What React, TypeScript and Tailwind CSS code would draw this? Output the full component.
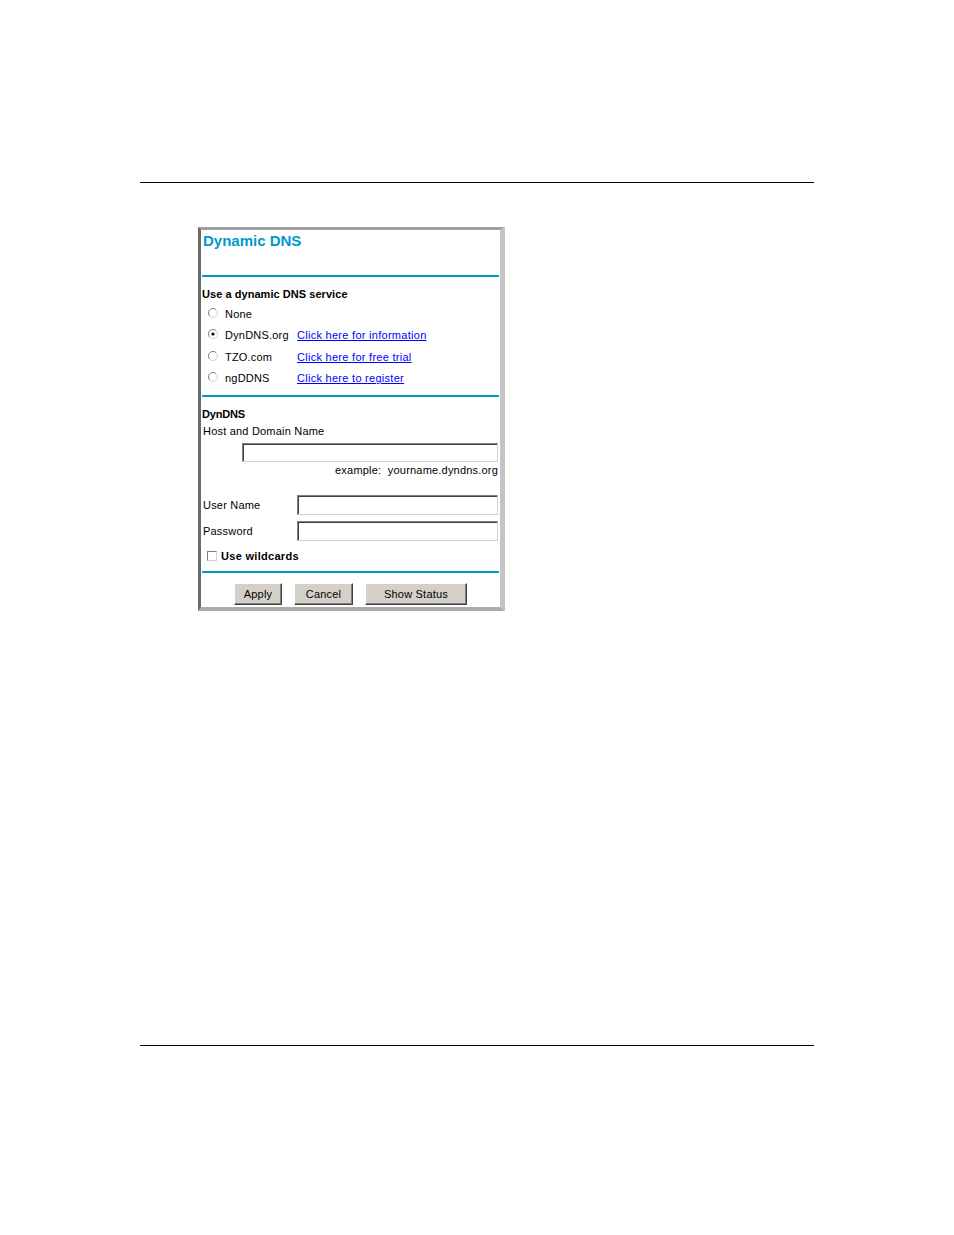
import * as React from 'react';

const FONT = { fontFamily: '"Liberation Sans", Arial, sans-serif' };

const SERVICES = [
  { label: 'None', link: '', checked: false },
  { label: 'DynDNS.org', link: 'Click here for information', checked: true },
  { label: 'TZO.com', link: 'Click here for free trial', checked: false },
  { label: 'ngDDNS', link: 'Click here to register', checked: false },
];

function Radio({ checked }: { checked: boolean }) {
  return (
    <svg width="10" height="10" viewBox="0 0 10 10" className="shrink-0">
      <circle cx="5" cy="5" r="4.5" fill="#fff" />
      <path d="M1.8 8.2 A4.5 4.5 0 0 1 8.2 1.8" fill="none" stroke="#7a7a7a" strokeWidth="1" />
      <path d="M8.2 1.8 A4.5 4.5 0 0 1 1.8 8.2" fill="none" stroke="#d4d0c8" strokeWidth="1" />
      {checked && <circle cx="5" cy="5" r="1.6" fill="#000" />}
    </svg>
  );
}

function Rule() {
  return <div className="ml-[1px] h-[2px] w-[297px] bg-[#0099cc]" />;
}

function TextBox({ className }: { className: string }) {
  return (
    <div
      className={`bg-white border border-t-[#808080] border-l-[#808080] border-r-[#d4d0c8] border-b-[#d4d0c8] shadow-[inset_1px_1px_0_#404040] ${className}`}
    />
  );
}

function WinButton({ label, width }: { label: string; width: string }) {
  return (
    <button
      className={`h-[22px] ${width} bg-[#d4d0c8] border border-t-white border-l-white border-r-[#404040] border-b-[#404040] shadow-[inset_-1px_-1px_0_#808080] text-[11px] tracking-[0.2px] text-black`}
    >
      {label}
    </button>
  );
}

export default function App() {
  return (
    <div className="w-[954px] h-[1235px] bg-white px-[140px] pt-[182px]" style={FONT}>
      <div className="h-px w-[674px] bg-black" />

      <div className="ml-[58px] mt-[44px] w-[307px] border-l-[3px] border-t-[3px] border-r-[5px] border-b-[4px] border-l-[#6a6a6a] border-t-[#a0a0a0] border-r-[#c4c4c4] border-b-[#acacac]">
        <div className="flex flex-col text-[11px] leading-[14px] text-black tracking-[0.2px]">
          <div className="h-[45px] pl-[2px] pt-[2px]">
            <span className="text-[15px] leading-[18px] font-bold text-[#0099cc] tracking-normal">Dynamic DNS</span>
          </div>
          <Rule />

          <div className="mt-[10px] pl-[1px] font-bold tracking-[0.05px]">Use a dynamic DNS service</div>

          <div className="mt-[2px] flex flex-col">
            {SERVICES.map((s) => (
              <div key={s.label} className="h-[21.5px] flex items-center pl-[7px]">
                <div className="-mt-[2px]">
                  <Radio checked={s.checked} />
                </div>
                <span className="ml-[7px] w-[72px]">{s.label}</span>
                {s.link && <a className="text-[#0000ff] underline tracking-[0.28px]" href="#">{s.link}</a>}
              </div>
            ))}
          </div>

          <div className="mt-[5.5px]">
            <Rule />
          </div>

          <div className="mt-[10.5px] pl-[1px] font-bold tracking-[-0.2px]">DynDNS</div>
          <div className="mt-[2.5px] pl-[2px]">Host and Domain Name</div>
          <TextBox className="mt-[5px] ml-[41px] w-[256px] h-[19px]" />
          <div className="mt-[1.5px] pr-[2px] text-right">example:&nbsp; yourname.dyndns.org</div>

          <div className="mt-[17.5px] flex items-center">
            <span className="w-[96px] pl-[2px]">User Name</span>
            <TextBox className="w-[201px] h-[20px]" />
          </div>
          <div className="mt-[6px] flex items-center">
            <span className="w-[96px] pl-[2px]">Password</span>
            <TextBox className="w-[201px] h-[20px]" />
          </div>

          <div className="mt-[8px] h-[14px] flex items-center pl-[6px]">
            <div className="w-[10px] h-[10px] bg-white border border-t-[#808080] border-l-[#808080] border-r-[#d4d0c8] border-b-[#d4d0c8]" />
            <span className="ml-[4px] font-bold tracking-[0.3px]">Use wildcards</span>
          </div>

          <div className="mt-[8px]">
            <Rule />
          </div>

          <div className="mt-[10px] mb-[2px] flex pl-[33px] gap-[12px]">
            <WinButton label="Apply" width="w-[48px]" />
            <WinButton label="Cancel" width="w-[59px]" />
            <WinButton label="Show Status" width="w-[102px]" />
          </div>
        </div>
      </div>

      <div className="mt-[434px] h-px w-[674px] bg-black" />
    </div>
  );
}
